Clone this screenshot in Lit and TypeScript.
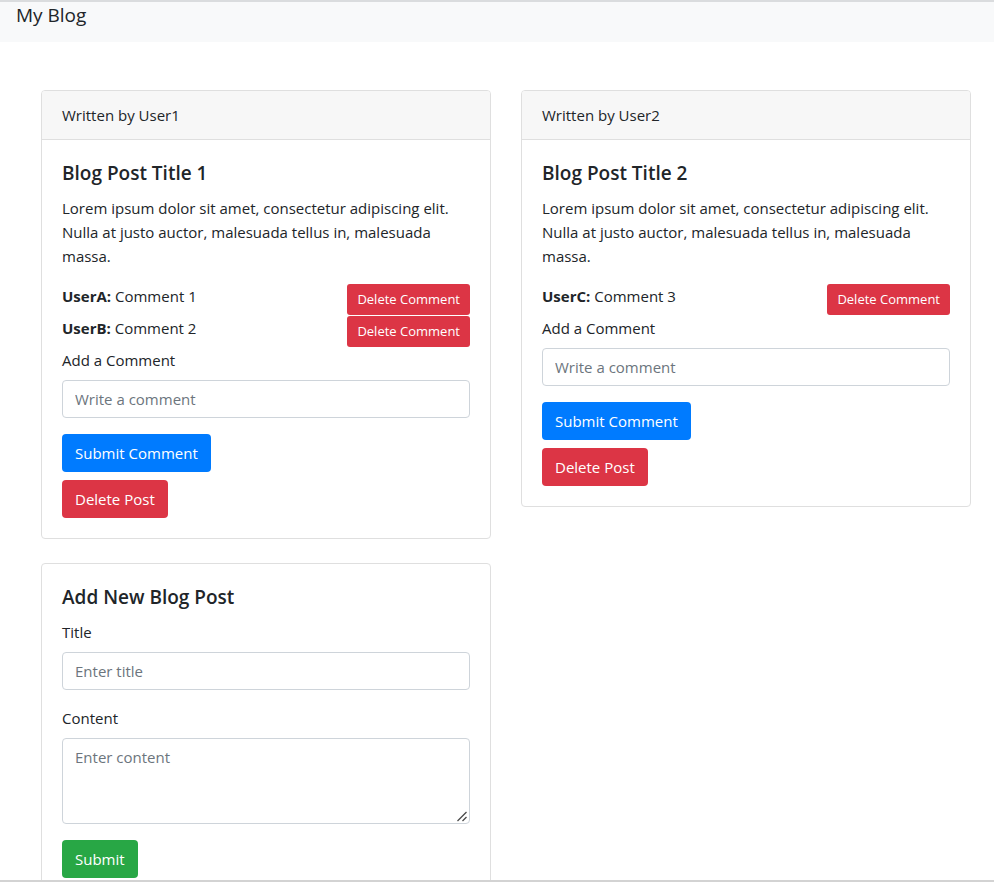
import { LitElement, html, css } from "lit";
import { customElement, property } from "lit/decorators.js";

interface BlogComment {
  user: string;
  text: string;
}

interface Post {
  id: number;
  author: string;
  title: string;
  body: string;
  comments: BlogComment[];
}

const LOREM =
  "Lorem ipsum dolor sit amet, consectetur adipiscing elit. Nulla at justo auctor, malesuada tellus in, malesuada massa.";

const POSTS: Post[] = [
  {
    id: 1,
    author: "User1",
    title: "Blog Post Title 1",
    body: LOREM,
    comments: [
      { user: "UserA", text: "Comment 1" },
      { user: "UserB", text: "Comment 2" },
    ],
  },
  {
    id: 2,
    author: "User2",
    title: "Blog Post Title 2",
    body: LOREM,
    comments: [{ user: "UserC", text: "Comment 3" }],
  },
];

const shared = css`
  * {
    box-sizing: border-box;
  }
  .card {
    border: 1px solid #dfdfdf;
    border-radius: 4px;
    background: #fff;
  }
  .card-header {
    padding: 12px 20px;
    background: #f7f7f7;
    border-bottom: 1px solid #dfdfdf;
    border-radius: 3px 3px 0 0;
  }
  .card-body {
    padding: 20px;
  }
  .card-title {
    margin: 0 0 10px;
    font-size: 19px;
    font-weight: 600;
    line-height: 26px;
  }
  .label {
    display: block;
    margin-bottom: 8px;
  }
  .control {
    display: block;
    width: 100%;
    height: 38px;
    margin: 0 0 16px;
    padding: 6px 12px;
    border: 1px solid #ced4da;
    border-radius: 4px;
    background: #fff;
    color: #495057;
    font: inherit;
  }
  .control::placeholder {
    color: #6c757d;
    opacity: 1;
  }
  .btn {
    display: block;
    padding: 6px 12px;
    border: 1px solid transparent;
    border-radius: 4px;
    color: #fff;
    font: inherit;
    white-space: nowrap;
    cursor: pointer;
  }
  .btn.small {
    padding: 4px 9px;
    border-radius: 3px;
    font-size: 13px;
    line-height: 21px;
  }
  .primary {
    background-color: #007bff;
  }
  .danger {
    background-color: #dc3545;
  }
  .success {
    background-color: #28a745;
  }
`;

@customElement("blog-post")
class BlogPost extends LitElement {
  @property({ attribute: false }) post!: Post;

  static styles = [
    shared,
    css`
      :host {
        display: block;
      }
      .text {
        margin: 0 0 16px;
      }
      .comments {
        margin: 0;
        padding: 0;
        list-style: none;
      }
      .comment {
        display: flex;
        justify-content: space-between;
        align-items: flex-start;
        min-height: 32px;
      }
      .comment-form {
        margin-bottom: 8px;
      }
    `,
  ];

  render() {
    const { id, author, title, body, comments } = this.post;
    return html`
      <article class="card">
        <div class="card-header">Written by ${author}</div>
        <div class="card-body">
          <h2 class="card-title">${title}</h2>
          <p class="text">${body}</p>
          <ul class="comments">
            ${comments.map(
              (c) => html`<li class="comment">
                <span><strong>${c.user}:</strong> ${c.text}</span>
                <button class="btn small danger" type="button">Delete Comment</button>
              </li>`
            )}
          </ul>
          <form class="comment-form" @submit=${(e: Event) => e.preventDefault()}>
            <label class="label" for="comment-${id}">Add a Comment</label>
            <input class="control" id="comment-${id}" type="text" placeholder="Write a comment" />
            <button class="btn primary" type="submit">Submit Comment</button>
          </form>
          <button class="btn danger" type="button">Delete Post</button>
        </div>
      </article>
    `;
  }
}

@customElement("app-root")
class AppRoot extends LitElement {
  static styles = [
    shared,
    css`
      :host {
        display: block;
        box-sizing: border-box;
        height: 100vh;
        overflow-y: auto;
        scrollbar-width: none;
        border-top: 2px solid #dadcde;
        border-bottom: 2px solid #d3d3d3;
        background: #fff;
        color: #212529;
        font-family: "Segoe UI", "Open Sans", "Noto Sans", sans-serif;
        font-size: 15px;
        line-height: 24px;
      }
      .navbar {
        display: flex;
        padding: 0 16px 14px;
        background: #f8f9fa;
      }
      .brand {
        color: inherit;
        font-size: 19px;
        line-height: 26px;
        text-decoration: none;
      }
      .grid {
        display: grid;
        grid-template-columns: repeat(2, minmax(0, 1fr));
        align-items: start;
        gap: 24px 30px;
        padding: 48px 23px 24px 41px;
      }
      .area-wrap {
        position: relative;
        margin-bottom: 16px;
      }
      .control.area {
        height: 86px;
        margin: 0;
        resize: vertical;
      }
      .area::-webkit-resizer {
        background: transparent;
      }
      .grip {
        position: absolute;
        right: 2px;
        bottom: 2px;
        width: 12px;
        height: 12px;
        pointer-events: none;
      }
    `,
  ];

  render() {
    return html`
      <nav class="navbar"><a class="brand" href="#">My Blog</a></nav>
      <main class="grid">
        ${POSTS.map((p) => html`<blog-post .post=${p}></blog-post>`)}
        <section class="card">
          <form class="card-body" @submit=${(e: Event) => e.preventDefault()}>
            <h2 class="card-title">Add New Blog Post</h2>
            <label class="label" for="title">Title</label>
            <input class="control" id="title" type="text" placeholder="Enter title" />
            <label class="label" for="content">Content</label>
            <div class="area-wrap">
              <textarea class="control area" id="content" placeholder="Enter content"></textarea>
              <svg class="grip" viewBox="0 0 12 12" aria-hidden="true">
                <path d="M1.5 11 L10.5 2 M6.5 11 L10.5 7" fill="none" stroke="#4a4a4a" stroke-width="1.3" />
              </svg>
            </div>
            <button class="btn success" type="submit">Submit</button>
          </form>
        </section>
      </main>
    `;
  }
}
